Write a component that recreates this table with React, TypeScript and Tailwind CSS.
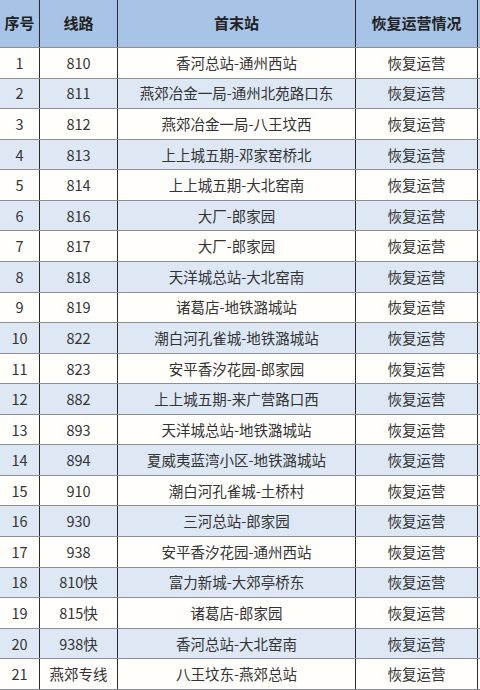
const rows: [string, string, string][] = [
  ["1", "810", "香河总站-通州西站"],
  ["2", "811", "燕郊冶金一局-通州北苑路口东"],
  ["3", "812", "燕郊冶金一局-八王坟西"],
  ["4", "813", "上上城五期-邓家窑桥北"],
  ["5", "814", "上上城五期-大北窑南"],
  ["6", "816", "大厂-郎家园"],
  ["7", "817", "大厂-郎家园"],
  ["8", "818", "天洋城总站-大北窑南"],
  ["9", "819", "诸葛店-地铁潞城站"],
  ["10", "822", "潮白河孔雀城-地铁潞城站"],
  ["11", "823", "安平香汐花园-郎家园"],
  ["12", "882", "上上城五期-来广营路口西"],
  ["13", "893", "天洋城总站-地铁潞城站"],
  ["14", "894", "夏威夷蓝湾小区-地铁潞城站"],
  ["15", "910", "潮白河孔雀城-土桥村"],
  ["16", "930", "三河总站-郎家园"],
  ["17", "938", "安平香汐花园-通州西站"],
  ["18", "810快", "富力新城-大郊亭桥东"],
  ["19", "815快", "诸葛店-郎家园"],
  ["20", "938快", "香河总站-大北窑南"],
  ["21", "燕郊专线", "八王坟东-燕郊总站"],
];

const cols = "grid grid-cols-[40px_78px_238px_122px]";

export default function App() {
  return (
    <div
      className="w-[480px] h-[690px] bg-white overflow-hidden"
      style={{ fontFamily: '"Noto Sans CJK SC", "Liberation Sans", sans-serif' }}
    >
      {/* Header */}
      <div className={`${cols} h-[48px] bg-[#a7c4e6] border-b border-[#8a8f96] text-[15px] font-bold text-[#222]`}>
        <div className="flex items-center justify-center border-r border-[#2a2a2a]">序号</div>
        <div className="flex items-center justify-center border-r border-[#2a2a2a]">线路</div>
        <div className="flex items-center justify-center border-r border-[#2a2a2a]">首末站</div>
        <div className="flex items-center justify-center border-r border-[#2a2a2a]">恢复运营情况</div>
      </div>

      {/* Rows */}
      {rows.map(([no, line, stations], i) => (
        <div
          key={no}
          className={`${cols} h-[30.57px] border-b border-[#8a8f96] text-[14.5px] text-[#333] ${
            i % 2 === 1 ? "bg-[#dde8f4]" : "bg-[#fffefb]"
          }`}
        >
          <div className="flex items-center justify-center border-r border-[#2a2a2a]">{no}</div>
          <div className="flex items-center justify-center border-r border-[#2a2a2a]">{line}</div>
          <div className="flex items-center justify-center border-r border-[#2a2a2a]">{stations}</div>
          <div className="flex items-center justify-center border-r border-[#2a2a2a]">恢复运营</div>
        </div>
      ))}
    </div>
  );
}
